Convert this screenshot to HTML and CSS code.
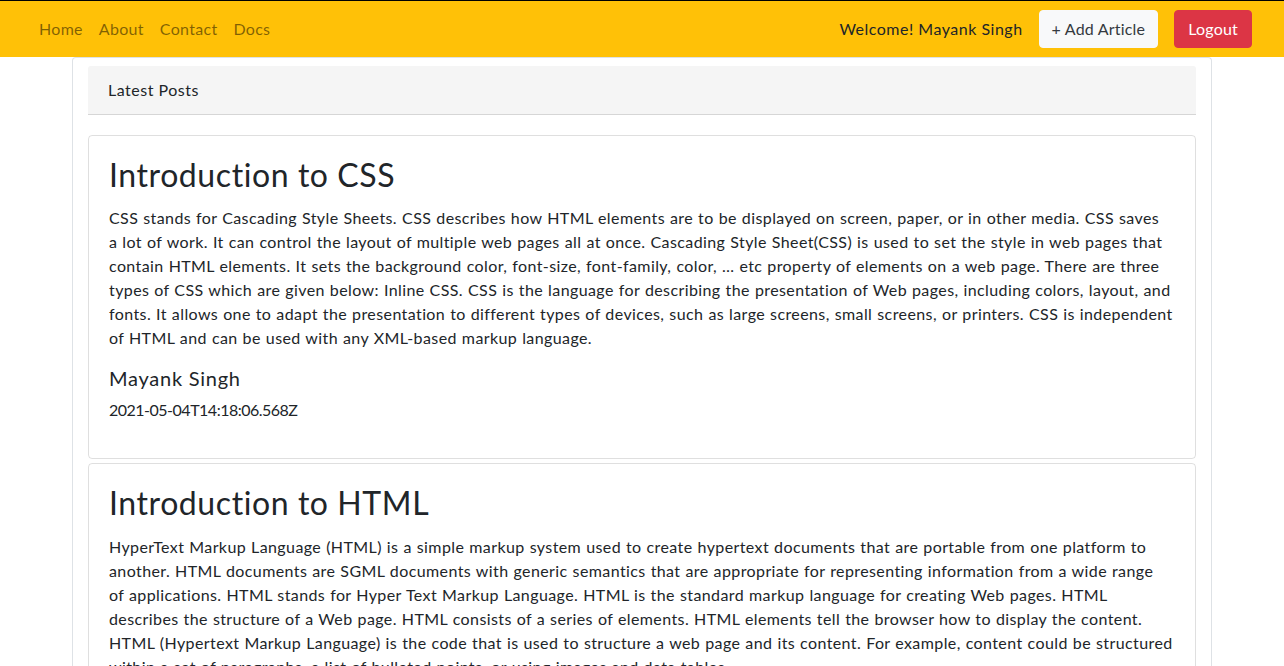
FILE: index.html
```html
<!DOCTYPE html>
<html>
<head>
<meta charset="utf-8">
<title>Blog</title>
<link rel="stylesheet" href="styles.css">
</head>
<body>
<nav class="navbar">
  <ul class="nav-links">
    <li><a href="#">Home</a></li>
    <li><a href="#">About</a></li>
    <li><a href="#">Contact</a></li>
    <li><a href="#">Docs</a></li>
  </ul>
  <div class="nav-right">
    <span class="welcome">Welcome! Mayank Singh</span>
    <a class="btn btn-light" href="#">+ Add Article</a>
    <a class="btn btn-danger" href="#">Logout</a>
  </div>
</nav>
<main class="container">
  <div class="posts-header">Latest Posts</div>
  <div class="posts">
    <article class="card">
      <h2 class="card-title">Introduction to CSS</h2>
      <p class="card-text">CSS stands for Cascading Style Sheets. CSS describes how HTML elements are to be displayed on screen, paper, or in other media. CSS saves a&nbsp;lot of work. It can control the layout of multiple web pages all at once. Cascading Style Sheet(CSS) is used to set the style in web pages that contain HTML elements. It sets the background color, font-size, font-family, color, … etc property of elements on a web page. There are three types of CSS which are given below: Inline CSS. CSS is the language for describing the presentation of Web pages, including colors, layout, and fonts. It allows one to adapt the presentation to different types of devices, such as large screens, small screens, or printers. CSS is independent of HTML and can be used with any XML-based markup language.</p>
      <h5 class="author">Mayank Singh</h5>
      <p class="date">2021-05-04T14:18:06.568Z</p>
    </article>
    <article class="card">
      <h2 class="card-title">Introduction to HTML</h2>
      <p class="card-text">HyperText Markup Language (HTML) is a simple markup system used to create hypertext documents that are portable from one platform to another. HTML documents are SGML documents with generic semantics that are appropriate for representing information from a wide range of&nbsp;applications. HTML stands for Hyper Text Markup Language. HTML is the standard markup language for creating Web pages. HTML describes the structure of a Web page. HTML consists of a series of elements. HTML elements tell the browser how to display the content. HTML (Hypertext Markup Language) is the code that is used to structure a web page and its content. For example, content could be structured within a set of paragraphs, a list of bulleted points, or using images and data tables.</p>
      <h5 class="author">Mayank Singh</h5>
      <p class="date">2021-05-04T14:20:11.214Z</p>
    </article>
  </div>
</main>
</body>
</html>
```
FILE: styles.css
```css
* { box-sizing: border-box; }
html, body { margin: 0; padding: 0; }
body {
  font-family: "Lato", "Open Sans", sans-serif;
  font-size: 16px;
  line-height: 1.5;
  color: #212529;
  background: #fff;
  border-top: 1px solid #000;
}
.navbar {
  display: flex;
  align-items: center;
  justify-content: space-between;
  height: 56px;
  padding: 0 32px 0 31px;
  background: #ffc107;
}
.nav-links {
  display: flex;
  list-style: none;
  margin: 0;
  padding: 0;
}
.nav-links a {
  display: block;
  padding: 8px;
  color: rgba(0,0,0,.5);
  text-decoration: none;
  letter-spacing: 0.3px;
}
.nav-right {
  display: flex;
  align-items: center;
  gap: 16px;
}
.welcome { color: #212529; letter-spacing: 0.5px; }
.btn {
  display: inline-block;
  height: 38px;
  padding: 6px 12px;
  border-radius: 4px;
  text-decoration: none;
  border: 1px solid transparent;
  letter-spacing: 0.2px;
}
.btn-light { background: #f8f9fa; color: #343a40; border-color: #f8f9fa; }
.btn-danger { background: #dc3545; color: #fff; border-color: #dc3545; padding: 6px 13px; }
.container {
  width: 1140px;
  margin: 0 auto;
  padding: 8px 15px 0;
  border: 1px solid #dee2e6;
  border-bottom: none;
  border-radius: 4px 4px 0 0;
}
.posts-header {
  padding: 12px 20px;
  background: #f5f5f5;
  border-bottom: 1px solid #d6d6d6;
  border-radius: 3px 3px 0 0;
  letter-spacing: 0.5px;
}
.posts {
  display: flex;
  flex-direction: column;
  gap: 4px;
  padding-top: 20px;
}
.card {
  padding: 20px;
  border: 1px solid rgba(0,0,0,.125);
  border-radius: 4px;
}
.card-title {
  margin: 0 0 12px;
  font-size: 32px;
  font-weight: 400;
  line-height: 1.2;
  letter-spacing: 0.58px;
}
.card-text { margin: 0 0 16px; letter-spacing: 0.4px; word-spacing: 0.5px; }
.author {
  margin: 0 0 8px;
  font-size: 20px;
  font-weight: 400;
  line-height: 1.2;
  letter-spacing: 0.75px;
}
.date { margin: 0 0 16px; letter-spacing: -0.5px; }
```
